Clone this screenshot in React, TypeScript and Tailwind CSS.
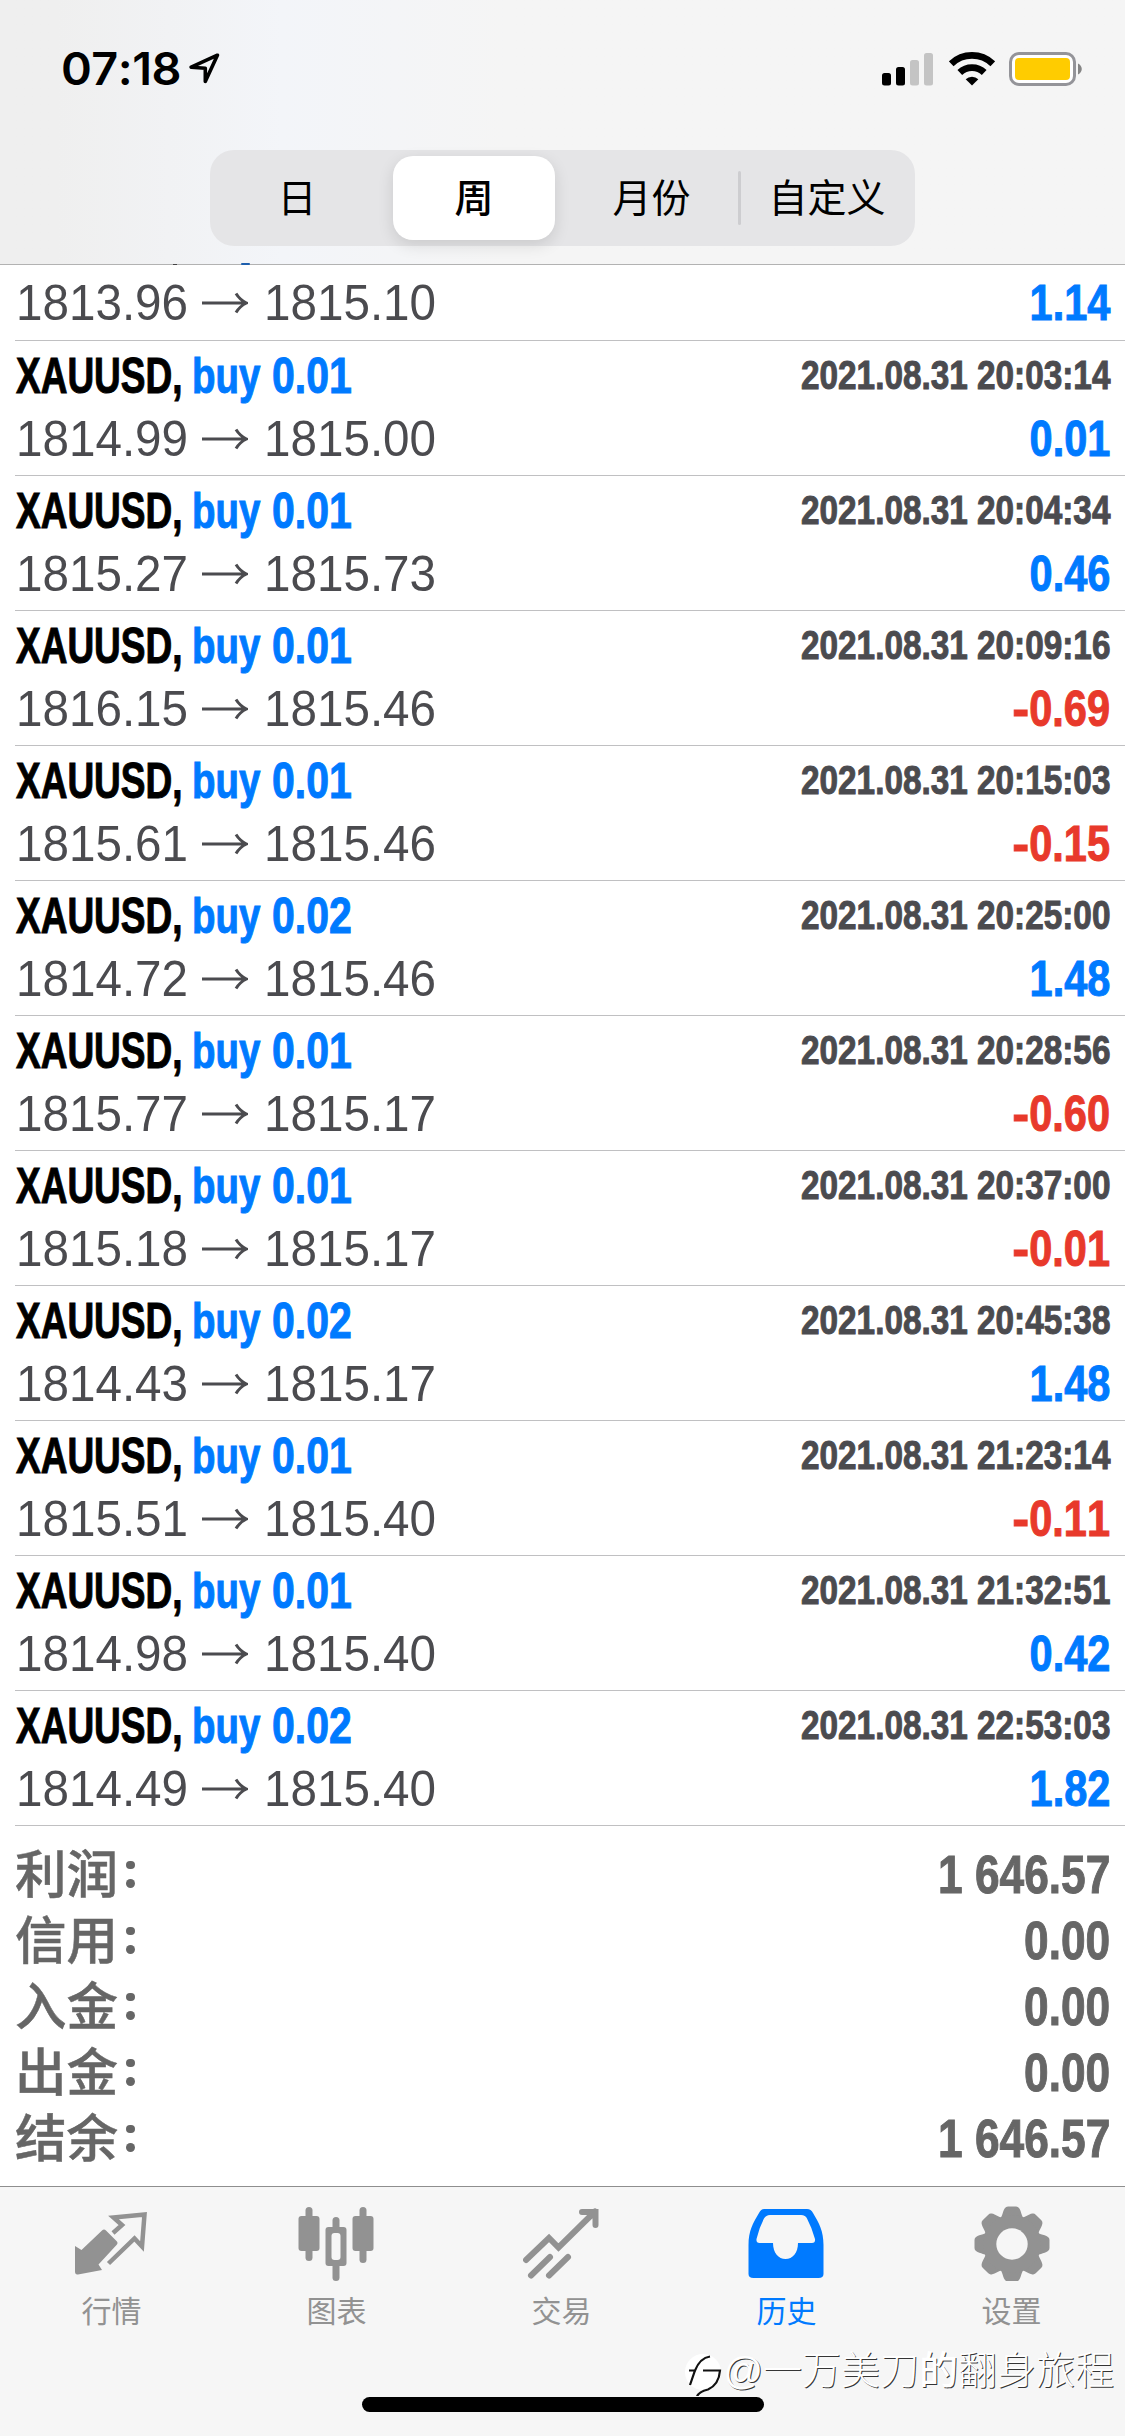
const trades = [
  { lots: 'buy 0.01', time: '2021.08.31 20:03:14', open: '1814.99', close: '1815.00', profit: '0.01' },
  { lots: 'buy 0.01', time: '2021.08.31 20:04:34', open: '1815.27', close: '1815.73', profit: '0.46' },
  { lots: 'buy 0.01', time: '2021.08.31 20:09:16', open: '1816.15', close: '1815.46', profit: '-0.69' },
  { lots: 'buy 0.01', time: '2021.08.31 20:15:03', open: '1815.61', close: '1815.46', profit: '-0.15' },
  { lots: 'buy 0.02', time: '2021.08.31 20:25:00', open: '1814.72', close: '1815.46', profit: '1.48' },
  { lots: 'buy 0.01', time: '2021.08.31 20:28:56', open: '1815.77', close: '1815.17', profit: '-0.60' },
  { lots: 'buy 0.01', time: '2021.08.31 20:37:00', open: '1815.18', close: '1815.17', profit: '-0.01' },
  { lots: 'buy 0.02', time: '2021.08.31 20:45:38', open: '1814.43', close: '1815.17', profit: '1.48' },
  { lots: 'buy 0.01', time: '2021.08.31 21:23:14', open: '1815.51', close: '1815.40', profit: '-0.11' },
  { lots: 'buy 0.01', time: '2021.08.31 21:32:51', open: '1814.98', close: '1815.40', profit: '0.42' },
  { lots: 'buy 0.02', time: '2021.08.31 22:53:03', open: '1814.49', close: '1815.40', profit: '1.82' },
];

const summary = [
  ['利润', '1 646.57'],
  ['信用', '0.00'],
  ['入金', '0.00'],
  ['出金', '0.00'],
  ['结余', '1 646.57'],
];

function StatusBar() {
  return (
    <div className="flex h-[150px] items-start justify-between pl-[61px] pr-[41px] pt-[41px]">
      <div className="flex items-start">
        <span className="block w-[128px] origin-left scale-x-[1.04] whitespace-nowrap font-['Inter'] text-[45px] font-semibold leading-[56px] tracking-[-0.5px]">
          07:18
        </span>
        <svg className="mt-[12px]" width="31" height="31" viewBox="0 0 31 31" fill="none" stroke="#000" strokeWidth="3.6" strokeLinejoin="round">
          <path d="M28.4 2.2 2.2 14.2l14.100 1V28.400z" />
        </svg>
      </div>
      <div className="mt-[11px] flex items-start">
        <svg width="52" height="34" viewBox="0 0 52 34">
          <rect x="0" y="21" width="9" height="12.5" rx="2.5" />
          <rect x="14" y="15" width="9" height="18.500" rx="2.5" />
          <rect x="28" y="8" width="9" height="25.500" rx="2.500" fill="#c4c4c4" />
          <rect x="42" y="1" width="9" height="32.500" rx="2.500" fill="#c4c4c4" />
        </svg>
        <svg className="ml-[15px]" width="46" height="34" viewBox="0 0 46 34">
          <path d="M23 33.500 16.700 27.200a9 9 0 0 1 12.600 0z" />
          <path d="M10.800 20.500a17.500 17.500 0 0 1 24.400 0" fill="none" stroke="#000" strokeWidth="6.800" />
          <path d="M2.200 11.800a30 30 0 0 1 41.600 0" fill="none" stroke="#000" strokeWidth="6.800" />
        </svg>
        <svg className="ml-[14px]" width="75" height="34" viewBox="0 0 75 34">
          <rect x="1.500" y="1.500" width="64" height="31" rx="8.500" fill="#fff" stroke="#949499" strokeWidth="3" />
          <rect x="6" y="6" width="55" height="22" rx="4" fill="#ffcc00" />
          <path d="M69 11.500c5 2.500 5 8.500 0 11z" fill="#858585" />
        </svg>
      </div>
    </div>
  );
}

function PeriodSwitch() {
  return (
    <div className="ml-[210px] flex h-24 w-[705px] items-center rounded-[24px] bg-[#e5e5e7] text-[39px] leading-none">
      <div className="w-[176px] -translate-x-[1px] text-center">日</div>
      <div className="flex h-[84px] w-[176px] pl-[7px] pr-[7px]">
        <div className="flex grow items-center justify-center rounded-[20px] bg-white font-medium shadow-[0_5px_16px_rgba(0,0,0,0.12)]">周</div>
      </div>
      <div className="w-[177px] translate-x-[1px] text-center">月份</div>
      <div className="h-[54px] w-[3px] -translate-x-[1px] rounded bg-[#cdcdd0]" />
      <div className="w-[172px] -translate-x-[1px] text-center">自定义</div>
    </div>
  );
}

function PriceLine({ open, close, profit }: { open: string; close: string; profit: string }) {
  const negative = profit.startsWith('-');
  return (
    <div className="flex h-[63px] items-center justify-between text-[50px] leading-none text-[#4b4b4f]">
      <div className="flex items-center">
        <span className="w-[187px] origin-left translate-x-[1px] scale-x-[0.952] whitespace-nowrap">{open}</span>
        <svg width="46" height="24" viewBox="0 0 46 24" fill="none" stroke="#4b4b4f" strokeWidth="3">
          <path d="M0 12h44M34 2.500q4 6.500 10.500 9.500-6.500 3-10.500 9.500" />
        </svg>
        <span className="ml-[15px] w-[187px] origin-left translate-x-[1px] scale-x-[0.952] whitespace-nowrap">{close}</span>
      </div>
      <span className={`origin-right scale-x-[0.83] whitespace-nowrap font-bold [-webkit-text-stroke:1px_currentColor] ${negative ? 'text-[#e8392b]' : 'text-[#007aff]'}`}>
        {negative && <span className="inline-block origin-right scale-x-[1.22]">-</span>}
        {profit.replace('-', '')}
      </span>
    </div>
  );
}

function TradeRow({ trade }: { trade: (typeof trades)[number] }) {
  const [side, lots] = trade.lots.split(' ');
  return (
    <div className="ml-[15px] h-[135px] border-b border-[#c0c0c2] pr-[15px]">
      <div className="flex h-[66px] items-center justify-between pt-[2px] font-bold leading-none [-webkit-text-stroke:1px_currentColor]">
        <div className="flex translate-y-[1px] text-[50px]">
          <span className="w-[177px] origin-left translate-x-[1px] scale-x-[0.74] whitespace-nowrap text-black">XAUUSD,</span>
          <span className="w-[80px] origin-left scale-x-[0.77] whitespace-nowrap text-[#007aff]">{side}</span>
          <span className="w-[97px] origin-left scale-x-[0.82] whitespace-nowrap text-[#007aff]">{lots}</span>
        </div>
        <span className="origin-right scale-x-[0.833] whitespace-nowrap text-[40px] text-[#4b4b4f]">{trade.time}</span>
      </div>
      <PriceLine open={trade.open} close={trade.close} profit={trade.profit} />
    </div>
  );
}

function QuotesIcon() {
  return (
    <svg width="76" height="76" viewBox="0 0 76 76" fill="#929292">
      <path d="M2 41 8.500 45 29 25.500q2-2 4 0l10.500 10.500q2 2 0 4L25.500 59.500 29 65 5 69.500q-3 .5-3-3z" />
      <path d="M40 28 49 20 40.500 12.500 71.500 9.500 69 41.500 61.500 33.500 35.500 58.500" fill="none" stroke="#929292" strokeWidth="4.500" />
    </svg>
  );
}

function ChartIcon() {
  return (
    <svg width="76" height="76" viewBox="0 0 76 76" fill="#929292">
      <rect x="7.500" y="2" width="7" height="54" rx="3.500" />
      <rect x="0.500" y="11" width="21" height="35" rx="3" />
      <rect x="61.500" y="2" width="7" height="56" rx="3.500" />
      <rect x="54.500" y="11" width="21" height="35" rx="3" />
      <rect x="34.500" y="12" width="7" height="64" rx="3.500" />
      <rect x="27.500" y="22" width="21" height="39" rx="3" />
      <rect x="33.500" y="28" width="9" height="27" rx="3" fill="#f6f6f6" />
    </svg>
  );
}

function TradeIcon() {
  return (
    <svg width="76" height="76" viewBox="0 0 76 76" fill="none" stroke="#929292" strokeWidth="6" strokeLinecap="round">
      <path d="M3 55 26 33 35.500 42.500 72 6.500M59 7h13.500v13" />
      <path d="M8 70.500 27 52M26 70.500 45 52" />
    </svg>
  );
}

function HistoryIcon() {
  return (
    <svg width="76" height="76" viewBox="0 0 76 76">
      <path fillRule="evenodd" fill="#007aff" d="M16 4h43q4 0 6 4c6 10 10.500 18 10.500 32v29q0 4-5 4h-65q-5 0-5-4V40C.500 26 5 18 11 8q2-4 5-4zM22 10q-4 0-6 3.500Q11 23 8.500 34q-.5 4 3 4H25c0 10 5.500 16 12.500 16S50 48 50 38h14q3.500 0 3-4Q64 23 59 13.500 57.500 10 53 10z" />
    </svg>
  );
}

function SettingsIcon() {
  return (
    <svg className="translate-x-[1px]" width="76" height="76" viewBox="-38 -39 76 76">
      <g fill="#929292">
        {[0, 45, 90, 135, 180, 225, 270, 315].map((angle) => (
          <path key={angle} transform={`rotate(${angle})`} d="M-15-22C-9-26-10-32-7-36q1-1.500 3-1.500h8q2 0 3 1.500c3 4 2 10 8 14z" />
        ))}
        <circle r="29" />
      </g>
      <circle r="15.700" fill="#f6f6f6" />
    </svg>
  );
}

const tabs = [
  { label: '行情', Icon: QuotesIcon },
  { label: '图表', Icon: ChartIcon },
  { label: '交易', Icon: TradeIcon },
  { label: '历史', Icon: HistoryIcon },
  { label: '设置', Icon: SettingsIcon },
];

function Watermark() {
  return (
    <div className="absolute right-[11px] top-[159px] flex items-center whitespace-nowrap text-[39px] font-light leading-[46px] text-white [text-shadow:1px_1px_0_rgba(0,0,0,0.8)]">
      <svg className="-mr-[2px] mt-[6px]" width="40" height="44" viewBox="0 0 40 44" fill="none">
        <circle cx="18" cy="20" r="18" fill="#fff" />
        <path d="M5 33 10 18.500Q15 6 25 4.500M4 18.500h7M18 18.500h17q-1 14-12 19-9 2-11 7" stroke="#111" strokeWidth="2.200" />
      </svg>
      <span>@一万美刀<span className="font-medium">的</span>翻身旅程</span>
    </div>
  );
}

export default function App() {
  return (
    <div className="flex h-[2436px] w-[1125px] flex-col overflow-hidden bg-white font-['Liberation_Sans','Noto_Sans_CJK_SC',sans-serif] text-black [font-kerning:none]">
      <header className="relative h-[265px] border-b border-[#b2b2b2] bg-linear-to-r from-[#efefef] from-5% via-[#f3f5f9] via-25% to-[#f5f5f5] to-45%">
        <StatusBar />
        <PeriodSwitch />
        {/* Descender tips of the row scrolled under the header */}
        <i className="absolute -bottom-px left-[173px] h-px w-[4px] bg-[#444]" />
        <i className="absolute -bottom-px left-[241px] h-[2px] w-[9px] rounded-sm bg-[#1d5fae]" />
      </header>
      <main className="h-[1921px]">
        <div className="ml-[15px] h-[76px] border-b border-[#c0c0c2] pr-[15px] pt-[6px]">
          <PriceLine open="1813.96" close="1815.10" profit="1.14" />
        </div>
        {trades.map((trade) => (
          <TradeRow key={trade.time} trade={trade} />
        ))}
        <div className="px-[15px] pt-[15px] text-[#666]">
          {summary.map(([label, value]) => (
            <div key={label} className="flex h-[66px] items-center justify-between leading-none">
              <div className="flex items-center text-[51.500px] font-medium">
                <span className="translate-y-[2px] [-webkit-text-stroke:0.5px_currentColor]">{label}</span>
                <span className="ml-[8px] flex flex-col gap-[10px]">
                  <span className="size-[8.500px] rounded-full bg-[#666]" />
                  <span className="size-[8.500px] rounded-full bg-[#666]" />
                </span>
              </div>
              <span className="origin-right scale-x-[0.835] whitespace-nowrap text-[53px] font-bold [-webkit-text-stroke:1px_currentColor]">{value}</span>
            </div>
          ))}
        </div>
      </main>
      <footer className="relative flex h-[250px] flex-col border-t border-[#8e8e8e] bg-[#f6f6f6]">
        <nav className="-ml-[2px] flex pt-[18px]">
          {tabs.map(({ label, Icon }) => (
            <div key={label} className={`flex w-[225px] flex-col items-center ${label === '历史' ? 'text-[#007aff]' : 'text-[#929292]'}`}>
              <Icon />
              <span className="mt-[14px] translate-x-[1px] text-[30px] leading-[34px]">{label}</span>
            </div>
          ))}
        </nav>
        <div className="mx-auto mt-[68px] h-[15px] w-[402px] rounded-full bg-black" />
        <Watermark />
      </footer>
    </div>
  );
}
